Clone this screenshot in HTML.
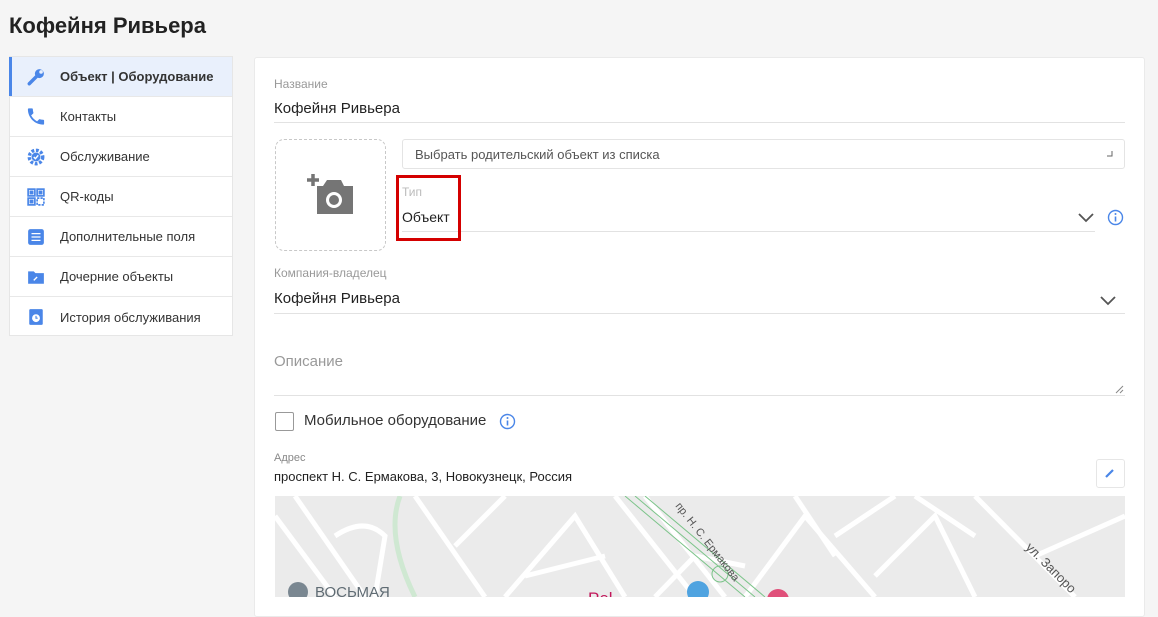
<!DOCTYPE html>
<html><head><meta charset="utf-8"><style>
*{box-sizing:border-box;margin:0;padding:0}
body{width:1158px;height:597px;overflow:hidden;background:#f5f5f5;font-family:"Liberation Sans",sans-serif;color:#222;position:relative}
.a{position:absolute}
h1{position:absolute;left:9px;top:13px;font-size:22px;font-weight:bold;color:#222}
.side{left:9px;top:56px;width:224px;height:280px;background:#fff;border:1px solid #e6e6e6}
.it{height:40px;border-bottom:1px solid #e8e8e8;display:flex;align-items:center;font-size:13px;color:#333;position:relative}
.it:last-child{border-bottom:none}
.it .ic{width:18px;height:18px;margin-left:17px;margin-right:15px;display:flex;align-items:center;justify-content:center}
.it.act{background:#e9f0fc;font-weight:bold}
.it.act:before{content:"";position:absolute;left:-1px;top:0;bottom:0;width:3px;background:#4a86e8}
.panel{left:254px;top:57px;width:891px;height:560px;background:#fff;border:1px solid #eaeaea;border-radius:3px}
.lbl{font-size:12px;color:#999}
.val{font-size:15px;color:#222}
.line{height:1px;background:#e2e2e2}
</style></head><body>
<h1>Кофейня Ривьера</h1>
<div class="a side">
 <div class="it act"><span class="ic"><svg width="18" height="18" viewBox="0 0 16 16"><path d="M2 14 L8 8" stroke="#4a86e8" stroke-width="3" stroke-linecap="round"/><circle cx="11" cy="5" r="4" fill="#4a86e8"/><circle cx="12.5" cy="3.5" r="1.6" fill="#e9f0fc"/></svg></span>Объект | Оборудование</div>
 <div class="it"><span class="ic"><svg width="19" height="19" viewBox="2 2 20 20"><path fill="#4a86e8" d="M6.6 10.8c1.4 2.8 3.8 5.1 6.6 6.6l2.2-2.2c.3-.3.7-.4 1-.2 1.1.4 2.3.6 3.6.6.6 0 1 .4 1 1V20c0 .6-.4 1-1 1C10.6 21 3 13.4 3 4c0-.6.4-1 1-1h3.5c.6 0 1 .4 1 1 0 1.3.2 2.5.6 3.6.1.3 0 .7-.2 1z"/></svg></span>Контакты</div>
 <div class="it"><span class="ic"><svg width="18" height="18" viewBox="0 0 16 16"><circle cx="8" cy="8" r="6" fill="none" stroke="#4a86e8" stroke-width="3" stroke-dasharray="2.5 1.5"/><circle cx="8" cy="8" r="4" fill="#4a86e8"/><path d="M6 8l1.5 1.5L10 6.5" stroke="#fff" stroke-width="1.3" fill="none"/></svg></span>Обслуживание</div>
 <div class="it"><span class="ic"><svg width="18" height="18" viewBox="0 0 16 16" fill="none" stroke="#4a86e8" stroke-width="1.5"><rect x="1" y="1" width="6" height="6"/><rect x="9" y="1" width="6" height="6"/><rect x="1" y="9" width="6" height="6"/><rect x="9" y="9" width="6" height="6" stroke-dasharray="2 1"/><rect x="3" y="3" width="2" height="2" fill="#4a86e8"/><rect x="11" y="3" width="2" height="2" fill="#4a86e8"/><rect x="3" y="11" width="2" height="2" fill="#4a86e8"/></svg></span>QR-коды</div>
 <div class="it"><span class="ic"><svg width="18" height="18" viewBox="0 0 16 16"><rect x="1" y="1" width="14" height="14" rx="2" fill="#4a86e8"/><path d="M4 5h8M4 8h8M4 11h8" stroke="#fff" stroke-width="1.2"/></svg></span>Дополнительные поля</div>
 <div class="it"><span class="ic"><svg width="18" height="18" viewBox="0 0 16 16"><path d="M1 3h5l1.5 1.5H15V14H1z" fill="#4a86e8"/><path d="M6 11l3-3" stroke="#fff" stroke-width="1.2"/></svg></span>Дочерние объекты</div>
 <div class="it"><span class="ic"><svg width="18" height="18" viewBox="0 0 16 16"><rect x="2" y="1" width="12" height="14" rx="1" fill="#4a86e8"/><circle cx="8" cy="9" r="3.5" fill="#fff"/><path d="M8 7v2h1.5" stroke="#4a86e8" stroke-width="1" fill="none"/></svg></span>История обслуживания</div>
</div>
<div class="a panel"></div>
<div class="a lbl" style="left:274px;top:77px">Название</div>
<div class="a val" style="left:274px;top:100px">Кофейня Ривьера</div>
<div class="a line" style="left:274px;top:122px;width:851px"></div>
<div class="a" style="left:275px;top:139px;width:111px;height:112px;border:1px dashed #c8c8c8;border-radius:9px"></div>
<svg class="a" style="left:305px;top:172px" width="50" height="44" viewBox="0 0 50 44"><path d="M2 8h12M8 2v12" stroke="#757575" stroke-width="3.5"/><path d="M12 14h6l4-6h14l3 6h9v28H12z" fill="#757575"/><circle cx="29" cy="28" r="8" fill="#fff"/><circle cx="29" cy="28" r="5" fill="#757575"/></svg>
<div class="a" style="left:402px;top:139px;width:723px;height:30px;border:1px solid #e4e4e4;border-radius:3px;font-size:13px;color:#555;padding:7px 12px">Выбрать родительский объект из списка</div>
<svg class="a" style="left:1106px;top:150px" width="8" height="8"><path d="M6 1v5H1" stroke="#666" fill="none"/></svg>
<div class="a lbl" style="left:402px;top:185px;color:#bbb">Тип</div>
<div class="a" style="left:402px;top:209px;font-size:14px">Объект</div>
<div class="a line" style="left:402px;top:231px;width:693px"></div>
<div class="a" style="left:396px;top:175px;width:65px;height:66px;border:3px solid #d40000"></div>
<svg class="a" style="left:1078px;top:213px" width="16" height="10"><path d="M1 1l7 7 7-7" stroke="#555" stroke-width="1.8" fill="none"/></svg>
<svg class="a" style="left:1107px;top:209px" width="17" height="17"><circle cx="8.5" cy="8.5" r="7" fill="none" stroke="#4a86e8" stroke-width="1.4"/><path d="M8.5 7.5v5" stroke="#4a86e8" stroke-width="1.6"/><circle cx="8.5" cy="5" r="1" fill="#4a86e8"/></svg>
<div class="a lbl" style="left:274px;top:266px">Компания-владелец</div>
<div class="a val" style="left:274px;top:290px">Кофейня Ривьера</div>
<div class="a line" style="left:274px;top:313px;width:851px"></div>
<svg class="a" style="left:1100px;top:296px" width="16" height="10"><path d="M1 1l7 7 7-7" stroke="#555" stroke-width="1.8" fill="none"/></svg>
<div class="a" style="left:274px;top:353px;font-size:15px;color:#999">Описание</div>
<div class="a line" style="left:274px;top:395px;width:851px"></div>
<svg class="a" style="left:1114px;top:384px" width="10" height="10"><path d="M9 2L2 9M9 6L6 9" stroke="#888"/></svg>
<div class="a" style="left:275px;top:412px;width:19px;height:19px;border:1.5px solid #999;border-radius:2px"></div>
<div class="a" style="left:304px;top:412px;font-size:15px;color:#333">Мобильное оборудование</div>
<svg class="a" style="left:499px;top:413px" width="17" height="17"><circle cx="8.5" cy="8.5" r="7" fill="none" stroke="#4a86e8" stroke-width="1.4"/><path d="M8.5 7.5v5" stroke="#4a86e8" stroke-width="1.6"/><circle cx="8.5" cy="5" r="1" fill="#4a86e8"/></svg>
<div class="a" style="left:274px;top:452px;font-size:11px;color:#888">Адрес</div>
<div class="a" style="left:274px;top:469px;font-size:13px;color:#222">проспект Н. С. Ермакова, 3, Новокузнецк, Россия</div>
<div class="a" style="left:1096px;top:459px;width:29px;height:29px;border:1px solid #e6e6e6;border-radius:3px"></div>
<svg class="a" style="left:1104px;top:467px" width="12" height="12"><path d="M2 10l7-7" stroke="#4a86e8" stroke-width="2.2"/></svg>
<svg class="a" style="left:275px;top:496px" width="850" height="101" viewBox="0 0 850 101">
<rect width="850" height="101" fill="#ebebeb"/>
<g stroke="#fff" stroke-width="5" fill="none">
<path d="M0 20 L60 101"/><path d="M20 0 L90 101"/><path d="M60 40 Q90 20 110 40 L100 101"/><path d="M140 0 L210 101"/><path d="M180 50 L230 0"/><path d="M230 101 L300 20 L350 101"/><path d="M340 0 L420 101"/><path d="M370 0 L450 101"/><path d="M470 101 L530 20 L600 101"/><path d="M520 0 L560 60"/><path d="M560 40 L620 0"/><path d="M600 80 L660 20 L700 101"/><path d="M700 0 L800 101"/><path d="M640 0 L700 40"/><path d="M760 60 L850 20"/><path d="M380 101 L420 60 L470 70"/><path d="M250 80 L330 60"/>
</g>
<path d="M350 0 L470 101" stroke="#7cc48a" stroke-width="1" fill="none"/><path d="M360 0 L480 101" stroke="#7cc48a" stroke-width="1"/><path d="M370 0 L490 101" stroke="#7cc48a" stroke-width="1"/><circle cx="445" cy="78" r="8" fill="none" stroke="#7cc48a"/>
<path d="M125 0 Q110 40 140 101" stroke="#cfe8d2" stroke-width="5" fill="none"/>
<text x="400" y="10" font-size="11" fill="#555" transform="rotate(52 400 10)" font-family="Liberation Sans">пр. Н. С. Ермакова</text>
<text x="750" y="52" font-size="13" fill="#555" transform="rotate(45 750 52)" font-family="Liberation Sans">ул. Запоро</text>
<circle cx="23" cy="96" r="10" fill="#7a8791"/><text x="40" y="101" font-size="15" fill="#5f6b73" font-family="Liberation Sans">ВОСЬМАЯ</text>
<circle cx="423" cy="96" r="11" fill="#4fa3e0"/><circle cx="503" cy="104" r="11" fill="#e0507a"/>
<text x="313" y="108" font-size="17" fill="#c2185b" font-family="Liberation Sans">Pel</text>
</svg>
</body></html>
